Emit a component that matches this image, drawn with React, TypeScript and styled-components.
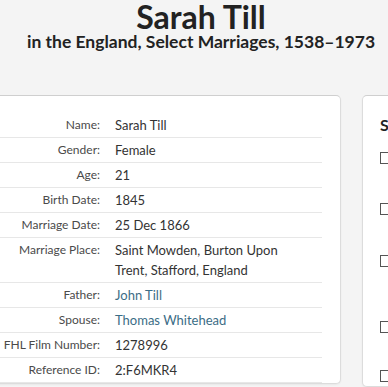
import React from "react";
import styled, { createGlobalStyle } from "styled-components";

const Global = createGlobalStyle`
  html, body {
    margin: 0;
    padding: 0;
    background: #f4f4f4;
    overflow: hidden;
  }
  body {
    font-family: Lato, "Liberation Sans", sans-serif;
    color: #333;
  }
`;

const Page = styled.div`
  width: 388px;
`;

const Header = styled.header`
  padding-left: 14px;
  text-align: center;
  color: #222;
`;

const Title = styled.h1`
  margin: 0;
  font-size: 32px;
  line-height: 34px;
  font-weight: 700;
`;

const Subtitle = styled.h2`
  margin: -2px 0 0;
  font-size: 17.5px;
  line-height: 20px;
  font-weight: 700;
  white-space: nowrap;
`;

const Columns = styled.div`
  display: flex;
  align-items: flex-start;
  gap: 21px;
  margin-top: 43px;
  margin-left: -60px;
`;

const Card = styled.section<{ $width: number }>`
  flex: 0 0 ${(p) => p.$width}px;
  box-sizing: border-box;
  background: #fff;
  border: 1px solid #dcdcdc;
  border-top-color: #cfcfcf;
  border-radius: 5px;
  box-shadow: 0 1px 2px rgba(0, 0, 0, 0.05);
  padding: 17px 18px 0 0;
`;

const Table = styled.dl`
  margin: 0;
`;

const Row = styled.div`
  display: grid;
  grid-template-columns: 159px 1fr;
  column-gap: 15px;
  padding: 2px 0;
  border-bottom: 1px solid #e7e7e7;
  line-height: 20px;
`;

const Label = styled.dt`
  text-align: right;
  font-size: 12px;
  color: #4a4a4a;
`;

const Value = styled.dd`
  margin: 0;
  padding-right: 22px;
  font-size: 13px;
  color: #333;
`;

const Link = styled.a`
  color: #3b6d86;
  text-decoration: none;
`;

const SideInner = styled.div`
  padding: 2px 0 0 17px;
`;

const SideTitle = styled.h3`
  margin: 0 0 13px;
  font-size: 16px;
  line-height: 20px;
  font-weight: 700;
  color: #222;
  white-space: nowrap;
`;

const Option = styled.label<{ $gap: number }>`
  display: flex;
  align-items: center;
  gap: 8px;
  margin-bottom: ${(p) => p.$gap}px;
  font-size: 14px;
  line-height: 20px;
  white-space: nowrap;
`;

const Box = styled.span`
  flex: 0 0 12px;
  height: 12px;
  border: 1px solid #555;
  box-sizing: border-box;
  background: #fff;
`;

type Field = { label: string; value: string; link?: boolean };

const fields: Field[] = [
  { label: "Name:", value: "Sarah Till" },
  { label: "Gender:", value: "Female" },
  { label: "Age:", value: "21" },
  { label: "Birth Date:", value: "1845" },
  { label: "Marriage Date:", value: "25 Dec 1866" },
  { label: "Marriage Place:", value: "Saint Mowden, Burton Upon Trent, Stafford, England" },
  { label: "Father:", value: "John Till", link: true },
  { label: "Spouse:", value: "Thomas Whitehead", link: true },
  { label: "FHL Film Number:", value: "1278996" },
  { label: "Reference ID:", value: "2:F6MKR4" },
];

const options = [
  { text: "Search for Sarah Till", gap: 31 },
  { text: "Search for Thomas Whitehead", gap: 32 },
  { text: "Search for John Till in records", gap: 46 },
  { text: "Search England records", gap: 29 },
  { text: "Search Marriages", gap: 0 },
];

export default function App() {
  return (
    <Page>
      <Global />
      <Header>
        <Title>Sarah Till</Title>
        <Subtitle>in the England, Select Marriages, 1538–1973</Subtitle>
      </Header>
      <Columns>
        <Card $width={401}>
          <Table>
            {fields.map((f) => (
              <Row key={f.label}>
                <Label>{f.label}</Label>
                <Value>{f.link ? <Link href="#">{f.value}</Link> : f.value}</Value>
              </Row>
            ))}
          </Table>
        </Card>
        <Card $width={260}>
          <SideInner>
            <SideTitle>Search with Research Wiki</SideTitle>
            {options.map((o) => (
              <Option key={o.text} $gap={o.gap}>
                <Box />
                {o.text}
              </Option>
            ))}
          </SideInner>
        </Card>
      </Columns>
    </Page>
  );
}
